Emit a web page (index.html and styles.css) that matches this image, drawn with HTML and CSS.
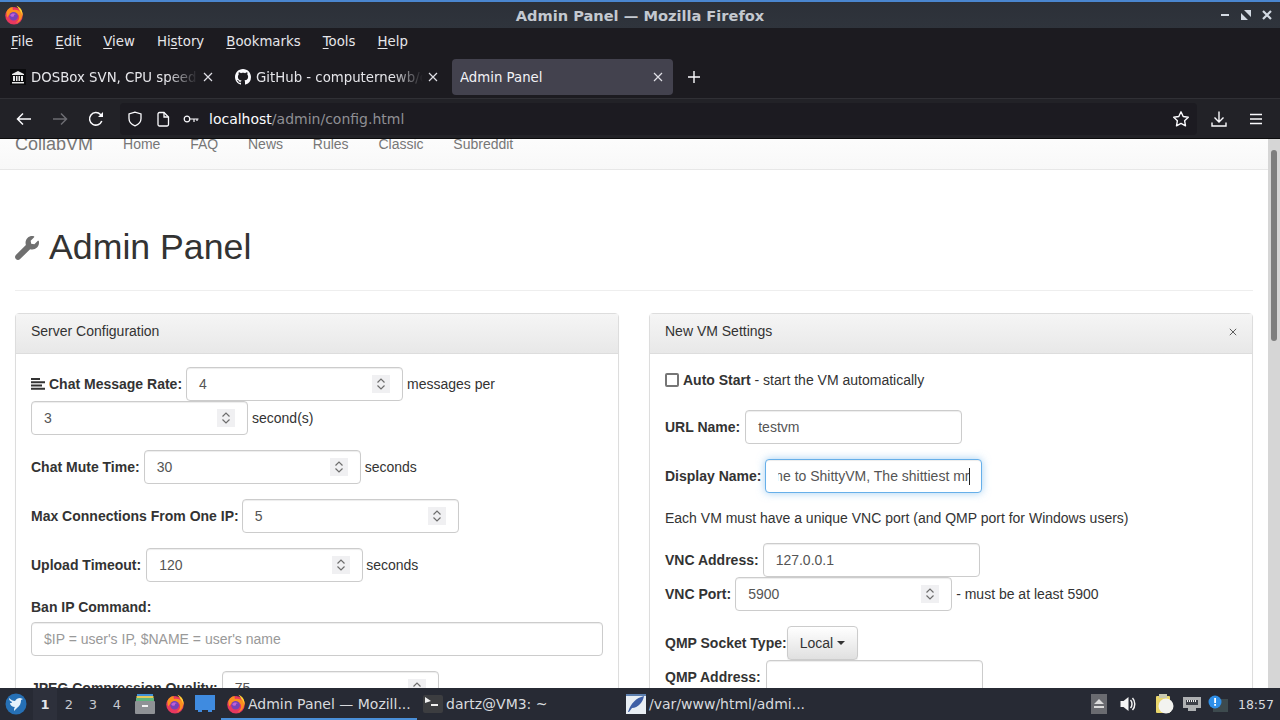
FILE: index.html
```html
<!DOCTYPE html>
<html lang="en">
<head>
<meta charset="utf-8">
<title>Admin Panel — Mozilla Firefox</title>
<link rel="stylesheet" href="styles.css">
</head>
<body>
<svg class="defs" width="0" height="0">
  <symbol id="ff" viewBox="0 0 24 24">
    <circle cx="12" cy="13" r="10.500" fill="#e8385f"/>
    <path d="M3 8C5 4 8 2 11 3c-1 1-1 2 0 3 3-1 7 0 8 2-1-3-2-5-4-7 5 2 8 7 7 12-1 5-4 8-8 9 3-2 5-5 4-9-2-4-8-5-11-2-1 1-2 2-3 4-1-2-1-5-1-6z" fill="#fb8f1f"/>
    <path d="M15 1c5 2 8 7 7 12-.5-3-2-6-4-8-1-2-2-3-3-4z" fill="#ffd53a"/>
    <circle cx="11.500" cy="13.500" r="5.200" fill="#7442b8"/>
    <path d="M7.500 12c2-2.500 5.500-2.500 7.500 0-1-.7-2-.7-3 0 .5 1.500-1 2.500-2.500 2-1 0-2-1-2-2z" fill="#c060d8"/>
  </symbol>
  <symbol id="chev" viewBox="0 0 18 18">
    <rect width="18" height="18" fill="#f0f0f2"/>
    <path d="M5.500 7.500 9 4l3.500 3.500M5.500 10.500 9 14l3.500-3.500" fill="none" stroke="#6d6d6d" stroke-width="1.200"/>
  </symbol>
  <symbol id="x" viewBox="0 0 10 10">
    <path d="M1 1l8 8M9 1l-8 8" fill="none" stroke="currentColor" stroke-width="1.200"/>
  </symbol>
</svg>

<div class="window">
  <header class="titlebar">
    <div class="title-side"><svg class="title-logo" width="20" height="20"><use href="#ff"/></svg></div>
    <div class="title-text">Admin Panel — Mozilla Firefox</div>
    <div class="title-side wm-buttons">
      <svg width="10" height="10" viewBox="0 0 10 10"><rect x="1" y="4" width="8" height="2" fill="#d3dae3"/></svg>
      <svg width="10" height="10" viewBox="0 0 10 10"><path d="M0 10V3l7 7zM10 0v7L3 0z" fill="#d3dae3"/></svg>
      <svg width="10" height="10" viewBox="0 0 10 10"><path d="M1 1l8 8M9 1l-8 8" stroke="#d3dae3" stroke-width="2.200" fill="none"/></svg>
    </div>
  </header>

  <nav class="menubar">
    <span class="menu-item"><u>F</u>ile</span>
    <span class="menu-item"><u>E</u>dit</span>
    <span class="menu-item"><u>V</u>iew</span>
    <span class="menu-item">Hi<u>s</u>tory</span>
    <span class="menu-item"><u>B</u>ookmarks</span>
    <span class="menu-item"><u>T</u>ools</span>
    <span class="menu-item"><u>H</u>elp</span>
  </nav>

  <div class="tabbar">
    <div class="tab">
      <svg class="favicon" viewBox="0 0 16 16"><rect width="16" height="16" fill="#0b0b0d"/><path d="M8 2 2 5v1h12V5zM3 7h2v5H3zM6 7h1.500v5H6zM8.500 7H10v5H8.500zM11 7h2v5h-2zM2 13h12v1.500H2z" fill="#e8e8e8"/></svg>
      <span class="tab-label">DOSBox SVN, CPU speed</span>
      <svg class="tab-close" width="10" height="10"><use href="#x"/></svg>
    </div>
    <div class="tab">
      <svg class="favicon" viewBox="0 0 16 16"><path fill="#fbfbfe" d="M8 0C3.580 0 0 3.580 0 8c0 3.540 2.290 6.530 5.470 7.590.4.070.55-.17.55-.38 0-.19-.01-.82-.01-1.490-2.010.37-2.530-.49-2.690-.94-.09-.23-.48-.94-.82-1.130-.28-.15-.68-.52-.01-.53.63-.01 1.080.58 1.230.82.720 1.210 1.870.87 2.330.66.070-.52.280-.87.510-1.070-1.780-.2-3.640-.89-3.640-3.950 0-.87.310-1.590.820-2.150-.08-.2-.36-1.020.080-2.120 0 0 .67-.21 2.200.82.640-.18 1.320-.27 2-.27.680 0 1.360.09 2 .27 1.530-1.040 2.200-.82 2.200-.82.440 1.100.160 1.920.080 2.120.510.56.820 1.270.820 2.150 0 3.070-1.870 3.750-3.650 3.950.290.25.540.73.540 1.480 0 1.070-.01 1.930-.01 2.200 0 .21.150.46.550.38A8.013 8.013 0 0016 8c0-4.420-3.580-8-8-8z"/></svg>
      <span class="tab-label">GitHub - computernewb/c</span>
      <svg class="tab-close" width="10" height="10"><use href="#x"/></svg>
    </div>
    <div class="tab tab-active">
      <span class="tab-label">Admin Panel</span>
      <svg class="tab-close" width="10" height="10"><use href="#x"/></svg>
    </div>
    <svg class="new-tab" width="14" height="14" viewBox="0 0 14 14"><path d="M7 1v12M1 7h12" stroke="#fbfbfe" stroke-width="1.400" fill="none"/></svg>
  </div>

  <div class="toolbar">
    <div class="tool-btn"><svg width="18" height="18" viewBox="0 0 18 18" fill="none" stroke="#fbfbfe" stroke-width="1.500"><path d="M16 9H2.500M8 3.500 2.500 9 8 14.500"/></svg></div>
    <div class="tool-btn"><svg width="18" height="18" viewBox="0 0 18 18" fill="none" stroke="#6c6c72" stroke-width="1.500"><path d="M2 9h13.500M10 3.500 15.500 9 10 14.500"/></svg></div>
    <div class="tool-btn"><svg width="18" height="18" viewBox="0 0 18 18" fill="none" stroke="#fbfbfe" stroke-width="1.500"><path d="M14.800 11A6.300 6.300 0 1 1 13.500 4.500L15.500 6.500"/><path d="M16 2v5h-5" fill="#fbfbfe" stroke="none"/></svg></div>
    <div class="urlbar">
      <svg class="url-shield" width="16" height="16" viewBox="0 0 16 16" fill="none" stroke="#fbfbfe" stroke-width="1.300"><path d="M8 1.200 2 3v4.500c0 3.500 2.500 6 6 7.300 3.500-1.300 6-3.800 6-7.300V3z"/></svg>
      <svg class="url-page" width="14" height="16" viewBox="0 0 14 16" fill="none" stroke="#fbfbfe" stroke-width="1.300"><path d="M2 3a1.500 1.500 0 0 1 1.500-1.500H8L12.500 6v7.500A1.500 1.500 0 0 1 11 15H3.500A1.500 1.500 0 0 1 2 13.500z"/><path d="M8 1.500V6h4.500" /></svg>
      <svg class="url-key" width="16" height="10" viewBox="0 0 16 10" fill="none" stroke="#fbfbfe" stroke-width="1.200"><circle cx="4" cy="5" r="2.800"/><path d="M7 5h8.500M11 5v3M14 5v2"/></svg>
      <span class="url-text"><span class="url-host">localhost</span>/admin/config.html</span>
      <svg class="url-star" width="18" height="18" viewBox="0 0 18 18" fill="none" stroke="#fbfbfe" stroke-width="1.400"><path d="M9 1.800l2.200 4.700 5.100.7-3.700 3.500.9 5.100L9 13.400l-4.500 2.400.9-5.100L1.700 7.200l5.100-.7z" stroke-linejoin="round"/></svg>
    </div>
    <div class="tool-btn"><svg width="18" height="18" viewBox="0 0 18 18" fill="none" stroke="#fbfbfe" stroke-width="1.400"><path d="M9 1.500v10M4.500 7.500 9 12l4.500-4.500M2 12.500v3.500h14v-3.500"/></svg></div>
    <div class="tool-btn tool-menu"><svg width="14" height="12" viewBox="0 0 14 12" stroke="#fbfbfe" stroke-width="1.300"><path d="M1 1.500h12M1 6h12M1 10.500h12"/></svg></div>
  </div>

  <div class="viewport">
    <div class="page">
      <div class="navbar">
        <span class="brand">CollabVM</span>
        <span class="nav-link">Home</span>
        <span class="nav-link">FAQ</span>
        <span class="nav-link">News</span>
        <span class="nav-link">Rules</span>
        <span class="nav-link">Classic</span>
        <span class="nav-link">Subreddit</span>
      </div>
      <div class="container">
        <div class="page-header">
          <svg class="wrench" width="24" height="24" viewBox="0 0 512 512"><path fill="#6f6f6f" d="M507.730 109.100c-2.240-9.030-13.540-12.090-20.120-5.510l-74.360 74.360-67.880-11.310-11.310-67.880 74.360-74.360c6.620-6.620 3.430-17.900-5.660-20.160-47.380-11.740-99.550.91-136.580 37.930-39.640 39.640-50.550 97.100-34.050 147.200L18.740 402.760c-24.990 24.990-24.990 65.510 0 90.500 24.990 24.990 65.510 24.990 90.500 0l213.210-213.210c50.120 16.710 107.470 5.680 147.370-34.220 37.070-37.070 49.700-89.320 37.910-136.730z"/></svg>
          <h1>Admin Panel</h1>
        </div>
        <div class="columns">
          <section class="panel">
            <div class="panel-heading"><span>Server Configuration</span></div>
            <div class="panel-body">
              <div class="group group-first">
                <label class="lbl"><svg class="align-icon" width="14" height="12" viewBox="0 0 14 12" fill="#333"><path d="M0 0h9v2H0zM0 3.300h14v2H0zM0 6.600h11v2H0zM0 9.800h14v2H0z"/></svg>Chat Message Rate:</label>
                <div class="field"><span>4</span><svg class="spin" width="18" height="18"><use href="#chev"/></svg></div>
                <span>messages per</span>
                <div class="field"><span>3</span><svg class="spin" width="18" height="18"><use href="#chev"/></svg></div>
                <span>second(s)</span>
              </div>
              <div class="group">
                <label class="lbl">Chat Mute Time:</label>
                <div class="field"><span>30</span><svg class="spin" width="18" height="18"><use href="#chev"/></svg></div>
                <span>seconds</span>
              </div>
              <div class="group">
                <label class="lbl lbl-less">Max Connections From One IP:</label>
                <div class="field"><span>5</span><svg class="spin" width="18" height="18"><use href="#chev"/></svg></div>
              </div>
              <div class="group">
                <label class="lbl lbl-more">Upload Timeout:</label>
                <div class="field"><span>120</span><svg class="spin" width="18" height="18"><use href="#chev"/></svg></div>
                <span class="after-tight">seconds</span>
              </div>
              <div class="group-stack">
                <label class="lbl">Ban IP Command:</label>
                <div class="field field-wide"><span class="placeholder">$IP = user's IP, $NAME = user's name</span></div>
              </div>
              <div class="group">
                <label class="lbl">JPEG Compression Quality:</label>
                <div class="field"><span>75</span><svg class="spin" width="18" height="18"><use href="#chev"/></svg></div>
              </div>
            </div>
          </section>
          <section class="panel">
            <div class="panel-heading"><span>New VM Settings</span><svg class="panel-close" width="8" height="8"><use href="#x"/></svg></div>
            <div class="panel-body">
              <div class="autostart">
                <span class="checkbox"></span>
                <span><b>Auto Start</b> - start the VM automatically</span>
              </div>
              <div class="group">
                <label class="lbl lbl-more">URL Name:</label>
                <div class="field"><span>testvm</span></div>
              </div>
              <div class="group">
                <label class="lbl">Display Name:</label>
                <div class="field field-focus"><div class="scroll-text"><span>Welcome to ShittyVM, The shittiest mr</span><i class="caret"></i></div></div>
              </div>
              <p class="note">Each VM must have a unique VNC port (and QMP port for Windows users)</p>
              <div class="group group-joined">
                <label class="lbl">VNC Address:</label>
                <div class="field"><span>127.0.0.1</span></div>
              </div>
              <div class="group">
                <label class="lbl">VNC Port:</label>
                <div class="field"><span>5900</span><svg class="spin" width="18" height="18"><use href="#chev"/></svg></div>
                <span>- must be at least 5900</span>
              </div>
              <div class="group group-joined">
                <label class="lbl lbl-flush">QMP Socket Type:</label>
                <div class="dropdown">Local<i class="drop-caret"></i></div>
              </div>
              <div class="group">
                <label class="lbl lbl-more">QMP Address:</label>
                <div class="field"></div>
              </div>
            </div>
          </section>
        </div>
      </div>
    </div>
    <div class="scrollbar"><div class="thumb"></div></div>
  </div>

  <footer class="taskbar">
    <svg class="start" width="22" height="22" viewBox="0 0 22 22"><circle cx="11" cy="11" r="10.500" fill="#2670b5"/><path d="M4 5c2 2 4 3 6 3 1-2 3-3 5-3l3 1-2 1c0 3-1 6-4 8l-3 3c0-2 0-3 1-4-3 0-5-2-5-4 1 0 2 0 2-1-2-1-3-2-3-4z" fill="#e6f2fb"/></svg>
    <div class="workspaces">
      <span class="ws ws-active">1</span><span class="ws">2</span><span class="ws">3</span><span class="ws">4</span>
    </div>
    <div class="launchers">
      <svg width="22" height="22" viewBox="0 0 22 22"><rect x="3" y="1" width="16" height="4" fill="#3f8fd6"/><rect x="2.500" y="3" width="17" height="4" fill="#e5c95a"/><rect x="2" y="5" width="18" height="4" fill="#5fb57d"/><rect x="1" y="8" width="20" height="13" rx="1" fill="#8f9296"/><rect x="8" y="12" width="6" height="2" fill="#f2f2f2"/></svg>
      <svg width="20" height="22" viewBox="0 0 24 24"><use href="#ff"/></svg>
      <svg width="22" height="20" viewBox="0 0 22 20"><path d="M1 1h20v15h-3v2h-4v-2H8v2H4v-2H1z" fill="#3f8be0"/></svg>
    </div>
    <div class="task task-active">
      <svg width="20" height="20"><use href="#ff"/></svg>
      <span>Admin Panel — Mozill...</span>
    </div>
    <div class="task task-term">
      <svg width="20" height="18" viewBox="0 0 20 18"><rect width="20" height="18" rx="2" fill="#3c3d40"/><path d="M2 2l6 4-6 2" fill="#f0f0f0"/><rect x="8" y="9" width="7" height="2" fill="#f0f0f0"/></svg>
      <span>dartz@VM3: ~</span>
    </div>
    <div class="task task-edit">
      <svg width="20" height="20" viewBox="0 0 20 20"><rect width="20" height="20" fill="#e8eef4"/><rect width="20" height="2" fill="#5d7fae"/><path d="M2 18C5 9 10 4 18 2c-1 6-6 12-12 12l-3 4z" fill="#3e5fa6"/></svg>
      <span>/var/www/html/admi...</span>
    </div>
    <div class="tray">
      <div class="tray-eject"><svg width="12" height="10" viewBox="0 0 12 10" fill="#dcdcdc"><path d="M6 0l5 5H1zM1 7h10v2H1z"/></svg></div>
      <svg class="tray-vol" width="17" height="16" viewBox="0 0 16 16"><path d="M1 5h3l5-4v14l-5-4H1z" fill="#f4f4f4"/><path d="M11 4c2 2 2 6 0 8M13 2c3 3 3 9 0 12" stroke="#f4f4f4" stroke-width="1.500" fill="none"/></svg>
      <svg class="tray-clip" width="20" height="22" viewBox="0 0 20 22"><rect x="1" y="3" width="14" height="17" rx="1" fill="#e9d66b"/><rect x="4" y="1" width="8" height="4" fill="#c9c9b0"/><circle cx="11" cy="13" r="7.500" fill="#f3f3f0"/></svg>
      <svg class="tray-net" width="20" height="16" viewBox="0 0 20 16"><path d="M1 1h18v11h-5v3H6v-3H1z" fill="#aeb0b2"/><rect x="4" y="4" width="12" height="5" fill="#3d4048"/><path d="M5 4h1v2H5zM7 4h1v2H7zM9 4h1v2H9zM11 4h1v2h-1zM13 4h1v2h-1z" fill="#eee"/></svg>
      <svg class="tray-alert" width="20" height="18" viewBox="0 0 20 18"><rect x="5" y="4" width="15" height="13" fill="#3d4a4e"/><circle cx="7" cy="7" r="6.500" fill="#2f8fe8"/><rect x="6.200" y="3" width="1.800" height="5" fill="#fff"/><rect x="6.200" y="9" width="1.800" height="1.800" fill="#fff"/></svg>
      <span class="clock">18:57</span>
    </div>
  </footer>
</div>
</body>
</html>
```
FILE: styles.css
```css
* { box-sizing: border-box; }
html, body { margin: 0; padding: 0; height: 100%; overflow: hidden; background: #fff; }
.defs { display: block; height: 0; }
.window { width: 1280px; height: 720px; display: flex; flex-direction: column; font-family: "DejaVu Sans", sans-serif; color: #fbfbfe; }

.titlebar { height: 28px; flex: none; display: grid; grid-template-columns: 200px 1fr 200px; align-items: center; padding: 0 8px; border-top: 2px solid #4a86cf; background: linear-gradient(#2c3038, #2f343c); }
.title-side { display: flex; align-items: center; }
.title-logo { flex: none; margin-left: -4px; }
.title-text { text-align: center; font-weight: 700; font-size: 14.600px; color: #c4c9d0; }
.wm-buttons { justify-content: flex-end; gap: 11px; }

.menubar { height: 26px; flex: none; display: flex; align-items: center; gap: 22.100px; padding: 0 11px; background: #1c1b20; font-size: 13.300px; color: #e6e6ea; }
.menu-item u { text-underline-offset: 2px; text-decoration-thickness: 1px; }

.tabbar { height: 45px; flex: none; display: flex; align-items: center; gap: 4px; padding: 2px 0 0 2px; background: #1c1b20; font-size: 13.300px; border-bottom: 1px solid #303035; }
.tab { width: 221px; height: 36px; display: flex; align-items: center; padding: 0 10px 0 8px; border-radius: 4px; color: #e6e6ea; }
.favicon { width: 16px; height: 16px; flex: none; margin-right: 5px; }
.tab-label { flex: 1; min-width: 0; overflow: hidden; white-space: nowrap; -webkit-mask-image: linear-gradient(90deg, #000 82%, transparent 100%); mask-image: linear-gradient(90deg, #000 82%, transparent 100%); }
.tab-close { flex: none; margin-left: 5px; color: #e0e0e6; }
.tab-active { background: #43424e; color: #f2f2f6; }
.tab-active .tab-label { -webkit-mask-image: none; mask-image: none; }
.new-tab { margin-left: 10px; flex: none; }

.toolbar { height: 40px; flex: none; display: flex; align-items: center; padding: 0 5px 0 6px; background: #222227; border-bottom: 1px solid #0c0c0d; }
.tool-btn { width: 36px; height: 32px; flex: none; display: flex; align-items: center; justify-content: center; }
.urlbar { flex: 1; height: 32px; margin: 0 4px 0 6px; display: flex; align-items: center; background: #1c1b21; border-radius: 4px; padding: 0 7px 0 7px; font-size: 14px; color: #8f8f94; }
.url-shield { flex: none; }
.url-page { flex: none; margin-left: 13px; }
.url-key { flex: none; margin-left: 13px; }
.url-text { margin-left: 10px; flex: 1; white-space: nowrap; }
.url-host { color: #fbfbfe; }
.url-star { flex: none; }
.tool-menu { width: 38px; }

.viewport { flex: 1; min-height: 0; display: flex; background: #fff; overflow: hidden; }
.page { width: 1268px; flex: none; overflow: hidden; font-family: "Liberation Sans", Arial, sans-serif; font-size: 14px; line-height: 20px; color: #333; }
.navbar { height: 51px; margin-top: -20px; display: flex; align-items: center; padding: 0 15px; background: linear-gradient(#fff, #f8f8f8); border-bottom: 1px solid #e7e7e7; color: #777; }
.brand { font-size: 18px; margin-right: 30px; }
.nav-link { margin-right: 29.800px; }

.container { padding: 0 15px; }
.page-header { display: flex; align-items: center; gap: 10px; margin-top: 57px; padding-bottom: 23px; border-bottom: 1px solid #eee; margin-bottom: 22px; }
.wrench { flex: none; margin-top: 2px; }
.page-header h1 { margin: 0; font-size: 35.700px; line-height: 40px; font-weight: 500; }

.columns { display: grid; grid-template-columns: 604px 604px; column-gap: 30px; }
.panel { border: 1px solid #ddd; border-radius: 4px; box-shadow: 0 1px 1px rgba(0,0,0,.05); }
.panel-heading { height: 40px; display: flex; align-items: center; justify-content: space-between; padding: 0 15px 6px; background: linear-gradient(#f5f5f5, #e8e8e8); border-bottom: 1px solid #ddd; }
.panel-close { color: #555; margin-top: 2px; }
.panel-body { padding: 13px 15px 15px; }

.group { display: flex; flex-wrap: wrap; align-items: center; column-gap: 4px; margin-bottom: 15px; }
.group-joined { margin-bottom: 0; }
.group-stack { margin-bottom: 15px; }
.group-stack .lbl { display: block; margin-bottom: 5px; }
.lbl { font-weight: 700; }
.lbl-flush { margin-right: -4px; }
.lbl-more { margin-right: 1px; }
.lbl-less { margin-right: -1px; }
.after-tight { margin-left: -1px; }
.align-icon { margin-right: 4px; vertical-align: -1px; }

.field { width: 217px; height: 34px; display: flex; align-items: center; padding: 0 12px; background: #fff; border: 1px solid #ccc; border-radius: 4px; box-shadow: inset 0 1px 1px rgba(0,0,0,.075); color: #555; }
.field-wide { width: 572px; }
.spin { margin-left: auto; flex: none; }
.placeholder { color: #999; }
.field-focus { border-color: #66afe9; box-shadow: inset 0 1px 1px rgba(0,0,0,.075), 0 0 8px rgba(102,175,233,.6); padding-right: 11px; }
.scroll-text { flex: 1; min-width: 0; display: flex; justify-content: flex-end; align-items: center; overflow: hidden; white-space: nowrap; }
.scroll-text span { flex: none; }
.caret { flex: none; width: 1px; height: 17px; background: #222; }

.autostart { display: flex; align-items: center; gap: 4px; height: 20px; margin: 3px 0 20px; }
.checkbox { width: 14px; height: 14px; border: 2px solid #767676; border-radius: 2px; background: #fff; }
.note { margin: 0 0 15px; }
.dropdown { height: 34px; display: flex; align-items: center; padding: 0 12px; border: 1px solid #ccc; border-radius: 4px; background: linear-gradient(#fff, #e0e0e0); box-shadow: 0 1px 0 rgba(255,255,255,.15), 0 1px 1px rgba(0,0,0,.08); color: #333; }
.drop-caret { width: 0; height: 0; margin-left: 4px; border-top: 4px solid #333; border-left: 4px solid transparent; border-right: 4px solid transparent; }

.scrollbar { flex: 1; padding: 11px 3px 0; background: #d6d6d6; }
.thumb { height: 191px; border-radius: 3px; background: #7e7e7e; }

.taskbar { height: 32px; flex: none; display: flex; align-items: center; padding-left: 5px; background: #272a34; color: #d8dade; font-size: 14px; }
.start { flex: none; }
.workspaces { display: flex; margin-left: 6px; }
.ws { width: 24px; height: 32px; display: flex; align-items: center; justify-content: center; font-size: 13px; color: #c8cad0; }
.ws-active { background: #2d303b; font-weight: 700; color: #e4e6ea; }
.launchers { display: flex; align-items: center; gap: 9px; margin-left: 5px; }
.task { height: 32px; display: flex; align-items: center; white-space: nowrap; }
.task-active { width: 196px; margin-left: 5px; padding: 2px 0 0 5px; gap: 2px; border-bottom: 2px solid #4a8fd8; }
.task-term { width: 199px; margin-left: 3px; gap: 3px; padding-left: 3px; }
.task-edit { margin-left: 2px; gap: 3px; padding-left: 5px; }
.tray { margin-left: auto; display: flex; align-items: center; padding-right: 6px; }
.tray-eject { width: 16px; height: 20px; display: flex; align-items: center; justify-content: center; background: #6a6b70; }
.tray-vol { margin-left: 12px; }
.tray-clip { margin-left: 19px; }
.tray-net { margin-left: 7px; }
.tray-alert { margin-left: 6px; }
.clock { margin-left: 10px; font-size: 12.500px; }
```
